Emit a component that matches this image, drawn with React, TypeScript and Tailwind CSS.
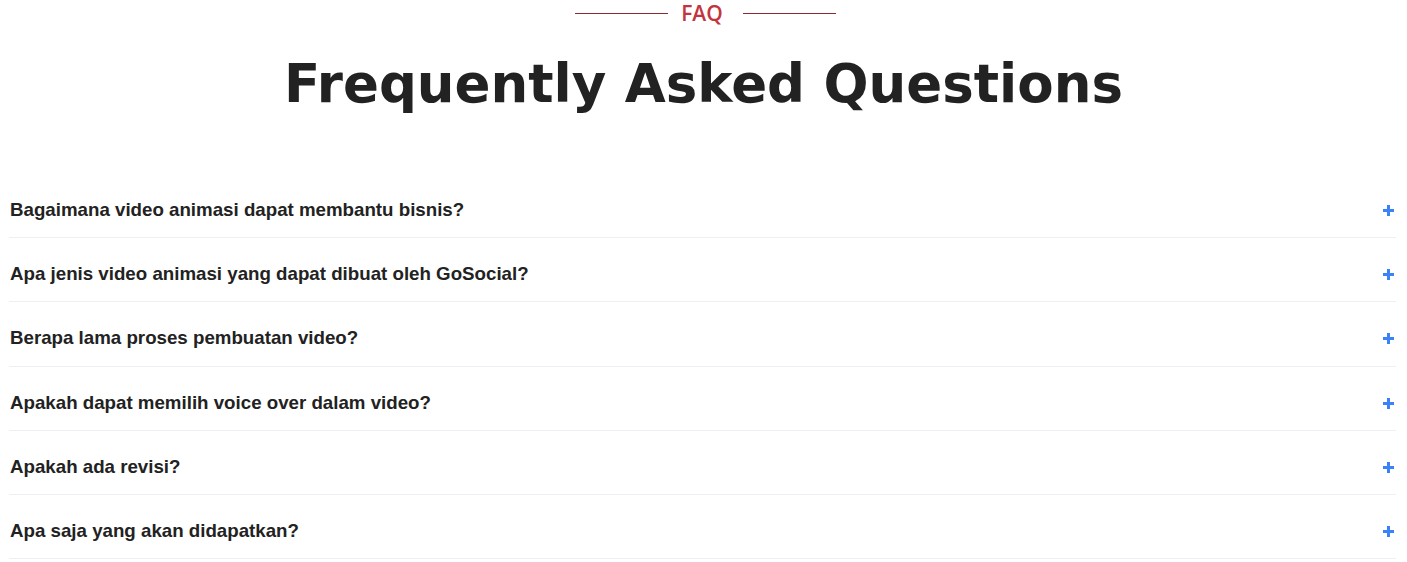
import React from "react";

const questions = [
  "Bagaimana video animasi dapat membantu bisnis?",
  "Apa jenis video animasi yang dapat dibuat oleh GoSocial?",
  "Berapa lama proses pembuatan video?",
  "Apakah dapat memilih voice over dalam video?",
  "Apakah ada revisi?",
  "Apa saja yang akan didapatkan?",
];

export default function App() {
  return (
    <div className="w-[1407px] h-[562px] bg-white overflow-hidden">
      <div className="flex items-center justify-center pt-[1px] pl-[4px]">
        <div className="w-[93px] h-px bg-[#8a2a30]" />
        <span className="ml-[13px] mr-[20px] text-[21px] leading-[24px] font-semibold text-[#c3353e] [font-family:'Open_Sans',sans-serif]">
          FAQ
        </span>
        <div className="w-[93px] h-px bg-[#8a2a30]" />
      </div>
      <h1 className="mt-[26px] text-center text-[53px] leading-[66px] font-bold text-[#222222] [font-family:'DejaVu_Sans',sans-serif]">
        Frequently Asked Questions
      </h1>
      <div className="mt-[57px] ml-[9px] mr-[11px]">
        {questions.map((q, i) => (
          <div
            key={q}
            className={`flex items-center justify-between pt-[25px] border-b border-[#edeff4] pl-[1px] ${
              i === 2 ? "pb-[17px]" : "pb-[16px]"
            }`}
          >
            <span className="text-[18.72px] leading-[22px] font-bold text-[#222222] [font-family:'Liberation_Sans',Arial,sans-serif]">
              {q}
            </span>
            <svg width="11" height="11" viewBox="0 0 11 11" className="mr-[2px]">
              <rect x="4" y="0" width="3" height="11" fill="#3b82f6" />
              <rect x="0" y="4" width="11" height="3" fill="#3b82f6" />
            </svg>
          </div>
        ))}
      </div>
    </div>
  );
}
